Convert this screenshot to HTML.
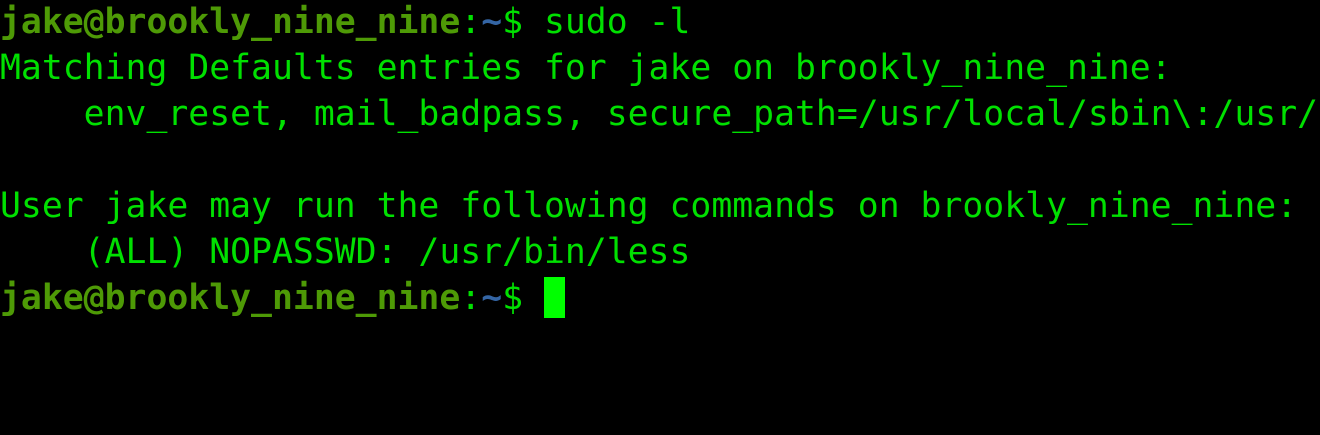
<html><head><style>
body{margin:0;background:#000;width:1320px;height:435px;overflow:hidden}
pre{margin:0;position:absolute;left:0;top:-1px;font-family:"DejaVu Sans Mono","Liberation Mono",monospace;font-size:34.75px;line-height:46px;color:#00e000;white-space:pre}
.p{color:#4e9a06;font-weight:bold}.t{color:#3465a4;font-weight:bold}
.c{display:inline-block;width:21px;height:41px;background:#00ff00;vertical-align:-9px}
</style></head><body><pre><span class="p">jake@brookly_nine_nine</span>:<span class="t">~</span>$ sudo -l
Matching Defaults entries for jake on brookly_nine_nine:
    env_reset, mail_badpass, secure_path=/usr/local/sbin\:/usr/

User jake may run the following commands on brookly_nine_nine:
    (ALL) NOPASSWD: /usr/bin/less
<span class="p">jake@brookly_nine_nine</span>:<span class="t">~</span>$ <span class="c"></span></pre></body></html>
